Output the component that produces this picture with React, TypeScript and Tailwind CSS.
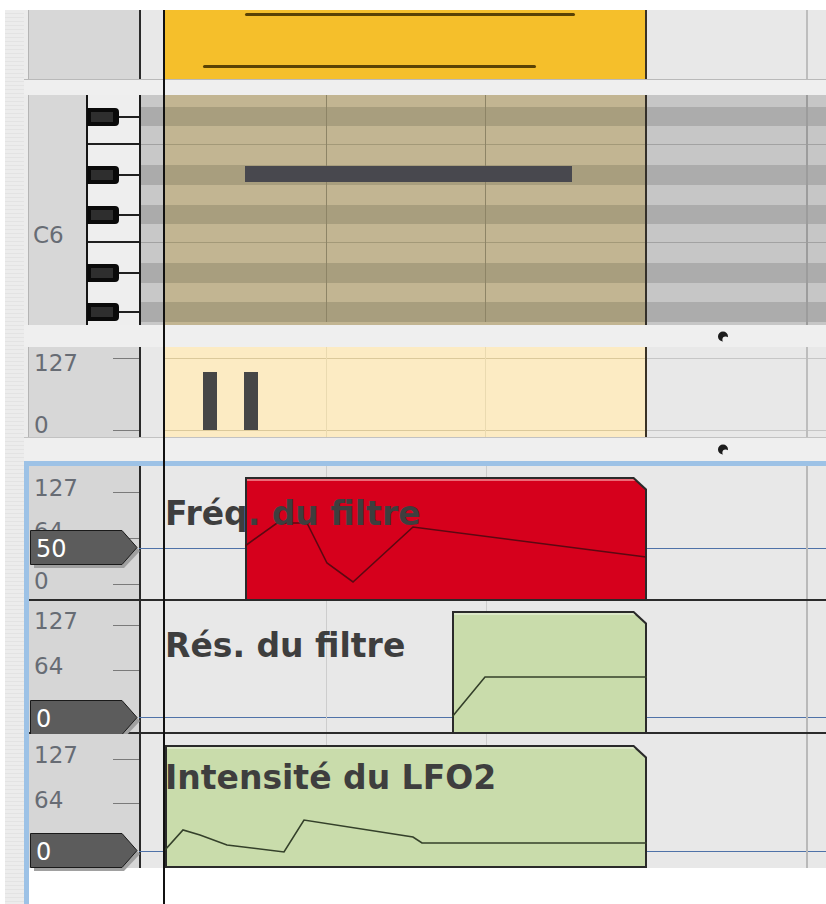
import React from "react";

type Pt = [number, number];

// piano-roll stripe rows, top to bottom
const KEYS: { h: number; black: boolean; line?: boolean }[] = [
  { h: 12, black: false },
  { h: 19, black: true },
  { h: 19, black: false, line: true },
  { h: 20, black: false },
  { h: 20, black: true },
  { h: 20, black: false },
  { h: 19, black: true },
  { h: 19, black: false, line: true },
  { h: 20, black: false },
  { h: 20, black: true },
  { h: 19, black: false },
  { h: 20, black: true },
  { h: 3, black: false },
];

const LABEL = "absolute font-['DejaVu_Sans',sans-serif] text-[23px] leading-none text-[#676c74]";
const TITLE =
  "absolute whitespace-nowrap font-['DejaVu_Sans',sans-serif] text-[33px] font-bold leading-none text-[#3e3e3e]";

function Handle() {
  return (
    <svg width="14" height="12" viewBox="0 0 14 12">
      <circle cx="6" cy="6.5" r="5" fill="#1c1c1c" />
      <circle cx="8.6" cy="9.6" r="3.2" fill="#f0f0f0" />
    </svg>
  );
}

function Gap({ h, handle }: { h: string; handle?: boolean }) {
  return (
    <div className={`relative bg-[#efefef] ${h}`}>
      {handle && (
        <div className="absolute left-[693px] top-[5px]">
          <Handle />
        </div>
      )}
    </div>
  );
}

function Tick({ top }: { top: number }) {
  return <div className="absolute left-[84px] h-px w-[26px] bg-[#7a7a7a]" style={{ top }} />;
}

function Tag({ value, top }: { value: string; top: number }) {
  return (
    <div className="absolute left-[1px] h-[35px] w-[108px]" style={{ top }}>
      <svg className="absolute left-0 top-0 overflow-visible" width="108" height="35" viewBox="0 0 108 35">
        <polygon points="4,5 94,5 110,21 94,38 4,38" fill="#a0a0a0" />
        <polygon points="0.5,0.5 92,0.5 107,17.5 92,34.5 0.5,34.5" fill="#5c5c5c" stroke="#1a1a1a" />
      </svg>
      <span className="absolute left-[6px] top-[7px] font-['DejaVu_Sans',sans-serif] text-[24px] leading-none text-white">
        {value}
      </span>
    </div>
  );
}

function Stripes({ light, dark, line, w }: { light: string; dark: string; line: string; w: string }) {
  return (
    <div className={`flex flex-col ${w}`}>
      {KEYS.map((k, i) => (
        <div
          key={i}
          className={k.black ? dark : k.line ? `${light} border-b ${line}` : light}
          style={{ height: k.h }}
        />
      ))}
    </div>
  );
}

function Piano() {
  return (
    <div className="flex w-[53px] flex-col border-l-2 border-[#151515] bg-[#eeeeee]">
      {KEYS.map((k, i) => (
        <div key={i} className={`relative ${k.line ? "border-b-2 border-[#1f1f1f]" : ""}`} style={{ height: k.h }}>
          {k.black && (
            <>
              <div className="absolute -left-px top-1/2 h-[18px] w-[32px] -translate-y-1/2 rounded-r-[4px] border-y-[4px] border-l-[4px] border-r-[6px] border-[#0a0a0a] bg-[#2e2e2e]" />
              <div className="absolute left-[31px] right-0 top-1/2 h-[2px] -translate-y-1/2 bg-[#1f1f1f]" />
            </>
          )}
        </div>
      ))}
    </div>
  );
}

function Clip({
  left,
  top,
  width,
  height,
  fill,
  hi,
  stroke,
  pts,
}: {
  left: number;
  top: number;
  width: number;
  height: number;
  fill: string;
  hi: string;
  stroke: string;
  pts: Pt[];
}) {
  return (
    <div
      className="absolute bg-[#2a2a2a] [clip-path:polygon(0_0,calc(100%-13px)_0,100%_12px,100%_100%,0_100%)]"
      style={{ left, top, width, height }}
    >
      <div
        className={`absolute inset-[2px] [clip-path:polygon(0_0,calc(100%-12px)_0,100%_11px,100%_100%,0_100%)] ${fill}`}
      >
        <div className={`h-[2px] ${hi}`} />
      </div>
      <svg className="absolute left-0 top-0" width={width} height={height}>
        <polyline
          points={pts.map(([x, y]) => `${x},${y}`).join(" ")}
          fill="none"
          stroke={stroke}
          strokeWidth="1.6"
        />
      </svg>
    </div>
  );
}

function GridLines() {
  return (
    <>
      <div className="absolute bottom-0 left-[161px] top-0 w-px bg-[#cdcdcd]" />
      <div className="absolute bottom-0 left-[321px] top-0 w-px bg-[#cdcdcd]" />
      <div className="absolute bottom-0 left-[641px] top-0 w-[2px] bg-[#b9b9b9]" />
    </>
  );
}

function AutoRow({
  h,
  border,
  labels,
  ticks,
  tag,
  tagTop,
  blue,
  title,
  titleTop,
  children,
}: {
  h: string;
  border: boolean;
  labels: { t: string; top: number }[];
  ticks: number[];
  tag: string;
  tagTop: number;
  blue: number;
  title: string;
  titleTop: number;
  children: React.ReactNode;
}) {
  return (
    <div className={`relative flex bg-[#e8e8e8] ${h} ${border ? "border-b-2 border-[#2b2b2b]" : ""}`}>
      <div className="absolute left-[108px] right-0 h-px bg-[#4f72a8]" style={{ top: blue }} />
      <div className="relative w-[110px] bg-[#d6d6d6]">
        {labels.map((l) => (
          <span key={l.t} className={`${LABEL} left-[5px]`} style={{ top: l.top }}>
            {l.t}
          </span>
        ))}
        {ticks.map((t) => (
          <Tick key={t} top={t} />
        ))}
        <Tag value={tag} top={tagTop} />
      </div>
      <div className="w-[2px] bg-[#2a2a2a]" />
      <div className="w-[24px]" />
      <div className="relative w-[661px]">
        <GridLines />
        {children}
        <span className={`${TITLE} left-0`} style={{ top: titleTop }}>
          {title}
        </span>
      </div>
    </div>
  );
}

export default function App() {
  return (
    <div className="relative h-[904px] w-[826px] overflow-hidden bg-white">
      <div className="h-[10px]" />
      <div className="flex h-[894px]">
        <div className="w-[5px] bg-white" />
        <div className="w-[19px] bg-[repeating-linear-gradient(180deg,#ececec_0px,#ececec_3px,#e3e3e3_3px,#e3e3e3_4px)]" />
        <div className="flex w-[802px] flex-col bg-[#ececec]">
          {/* audio clip track */}
          <div className="flex h-[70px] border-b border-[#b9b9b9]">
            <div className="w-[4px]" />
            <div className="w-[111px] border-l border-[#b4b4b4] bg-[#d7d7d7]" />
            <div className="w-[2px] bg-[#2a2a2a]" />
            <div className="w-[24px] bg-[#e8e8e8]" />
            <div className="flex w-[661px] bg-[#e8e8e8]">
              <div className="relative w-[480px] bg-[#f5bf2b]">
                <div className="absolute left-[80px] top-[3px] h-[3px] w-[330px] rounded-full bg-[#5a4204]" />
                <div className="absolute left-[38px] top-[55px] h-[3px] w-[333px] rounded-full bg-[#5a4204]" />
              </div>
              <div className="w-[2px] bg-[#3a3226]" />
              <div className="ml-[159px] w-[2px] bg-[#bdbdbd]" />
            </div>
          </div>
          <Gap h="h-[15px]" />

          {/* piano roll */}
          <div className="flex h-[230px]">
            <div className="w-[4px]" />
            <div className="relative w-[58px] border-l border-[#b4b4b4] bg-[#d7d7d7]">
              <span className={`${LABEL} left-[4px] top-[129px]`}>C6</span>
            </div>
            <Piano />
            <div className="w-[2px] bg-[#1a1a1a]" />
            <Stripes light="bg-[#c8c8c8]" dark="bg-[#ababab]" line="border-[#a2a2a2]" w="w-[24px]" />
            <div className="relative flex w-[661px]">
              <Stripes light="bg-[#c2b592]" dark="bg-[#a89e7e]" line="border-[#a39978]" w="w-[480px]" />
              <div className="w-[2px] bg-[#34302a]" />
              <Stripes light="bg-[#c6c6c6]" dark="bg-[#acacac]" line="border-[#a2a2a2]" w="w-[179px]" />
              <div className="absolute bottom-[3px] left-[161px] top-0 w-px bg-[#8d8466]" />
              <div className="absolute bottom-[3px] left-[320px] top-0 w-px bg-[#8d8466]" />
              <div className="absolute bottom-0 left-[641px] top-0 w-[2px] bg-[#9c9c9c]" />
              <div className="absolute left-[80px] top-[71px] h-[16px] w-[327px] bg-[#48484e]" />
            </div>
          </div>
          <Gap h="h-[22px]" handle />

          {/* velocity lane */}
          <div className="flex h-[91px] border-b border-[#c2c2c2]">
            <div className="w-[4px]" />
            <div className="relative w-[111px] border-l border-[#b4b4b4] bg-[#d7d7d7]">
              <span className={`${LABEL} left-[5px] top-[5px]`}>127</span>
              <span className={`${LABEL} left-[5px] top-[67px]`}>0</span>
              <Tick top={11} />
              <Tick top={83} />
            </div>
            <div className="w-[2px] bg-[#2a2a2a]" />
            <div className="w-[24px] bg-[#e8e8e8]" />
            <div className="flex w-[661px] bg-[#e8e8e8]">
              <div className="relative w-[480px] bg-[#fcebc3]">
                <div className="absolute left-0 right-0 top-[11px] h-px bg-[#dbc99b]" />
                <div className="absolute left-0 right-0 top-[83px] h-px bg-[#dbc99b]" />
                <div className="absolute bottom-0 left-[161px] top-0 w-px bg-[#eadab0]" />
                <div className="absolute bottom-0 left-[320px] top-0 w-px bg-[#eadab0]" />
                <div className="absolute left-[38px] top-[25px] h-[58px] w-[14px] bg-[#464646]" />
                <div className="absolute left-[79px] top-[25px] h-[58px] w-[14px] bg-[#464646]" />
              </div>
              <div className="w-[2px] bg-[#3a3226]" />
              <div className="relative w-[179px]">
                <div className="absolute left-0 right-0 top-[11px] h-px bg-[#c6c6c6]" />
                <div className="absolute left-0 right-0 top-[83px] h-px bg-[#c6c6c6]" />
                <div className="absolute bottom-0 left-[159px] top-0 w-[2px] bg-[#bdbdbd]" />
              </div>
            </div>
          </div>
          <Gap h="h-[23px]" handle />

          {/* selected automation lanes */}
          <div className="flex flex-1 flex-col border-l-[5px] border-t-[5px] border-[#9dc2e6] bg-white">
            <AutoRow
              h="h-[135px]"
              border
              labels={[
                { t: "127", top: 11 },
                { t: "64", top: 54 },
                { t: "0", top: 104 },
              ]}
              ticks={[26, 72, 118]}
              tag="50"
              tagTop={64}
              blue={82}
              title="Fréq. du filtre"
              titleTop={31}
            >
              <Clip
                left={80}
                top={11}
                width={402}
                height={124}
                fill="bg-[#d6001c]"
                hi="bg-[#ec6c78]"
                stroke="#5c0812"
                pts={[
                  [0, 69],
                  [32, 46],
                  [62, 46],
                  [82, 86],
                  [108, 105],
                  [168, 50],
                  [401, 80],
                ]}
              />
            </AutoRow>
            <AutoRow
              h="h-[133px]"
              border
              labels={[
                { t: "127", top: 9 },
                { t: "64", top: 54 },
              ]}
              ticks={[24, 69]}
              tag="0"
              tagTop={99}
              blue={116}
              title="Rés. du filtre"
              titleTop={28}
            >
              <Clip
                left={287}
                top={10}
                width={195}
                height={123}
                fill="bg-[#c9dcab]"
                hi="bg-[#dce8c8]"
                stroke="#34402a"
                pts={[
                  [0, 106],
                  [33, 66],
                  [195, 66],
                ]}
              />
            </AutoRow>
            <AutoRow
              h="h-[134px]"
              border={false}
              labels={[
                { t: "127", top: 10 },
                { t: "64", top: 55 },
              ]}
              ticks={[25, 69]}
              tag="0"
              tagTop={99}
              blue={117}
              title="Intensité du LFO2"
              titleTop={27}
            >
              <Clip
                left={0}
                top={11}
                width={482}
                height={123}
                fill="bg-[#c9dcab]"
                hi="bg-[#dce8c8]"
                stroke="#34402a"
                pts={[
                  [0, 105],
                  [18, 85],
                  [35, 90],
                  [62, 100],
                  [119, 107],
                  [139, 75],
                  [248, 92],
                  [257, 98],
                  [482, 98],
                ]}
              />
            </AutoRow>
          </div>
        </div>
      </div>

      {/* playhead */}
      <div className="absolute bottom-0 left-[163px] top-[10px] z-10 w-[2px] bg-[#111111]" />
    </div>
  );
}
